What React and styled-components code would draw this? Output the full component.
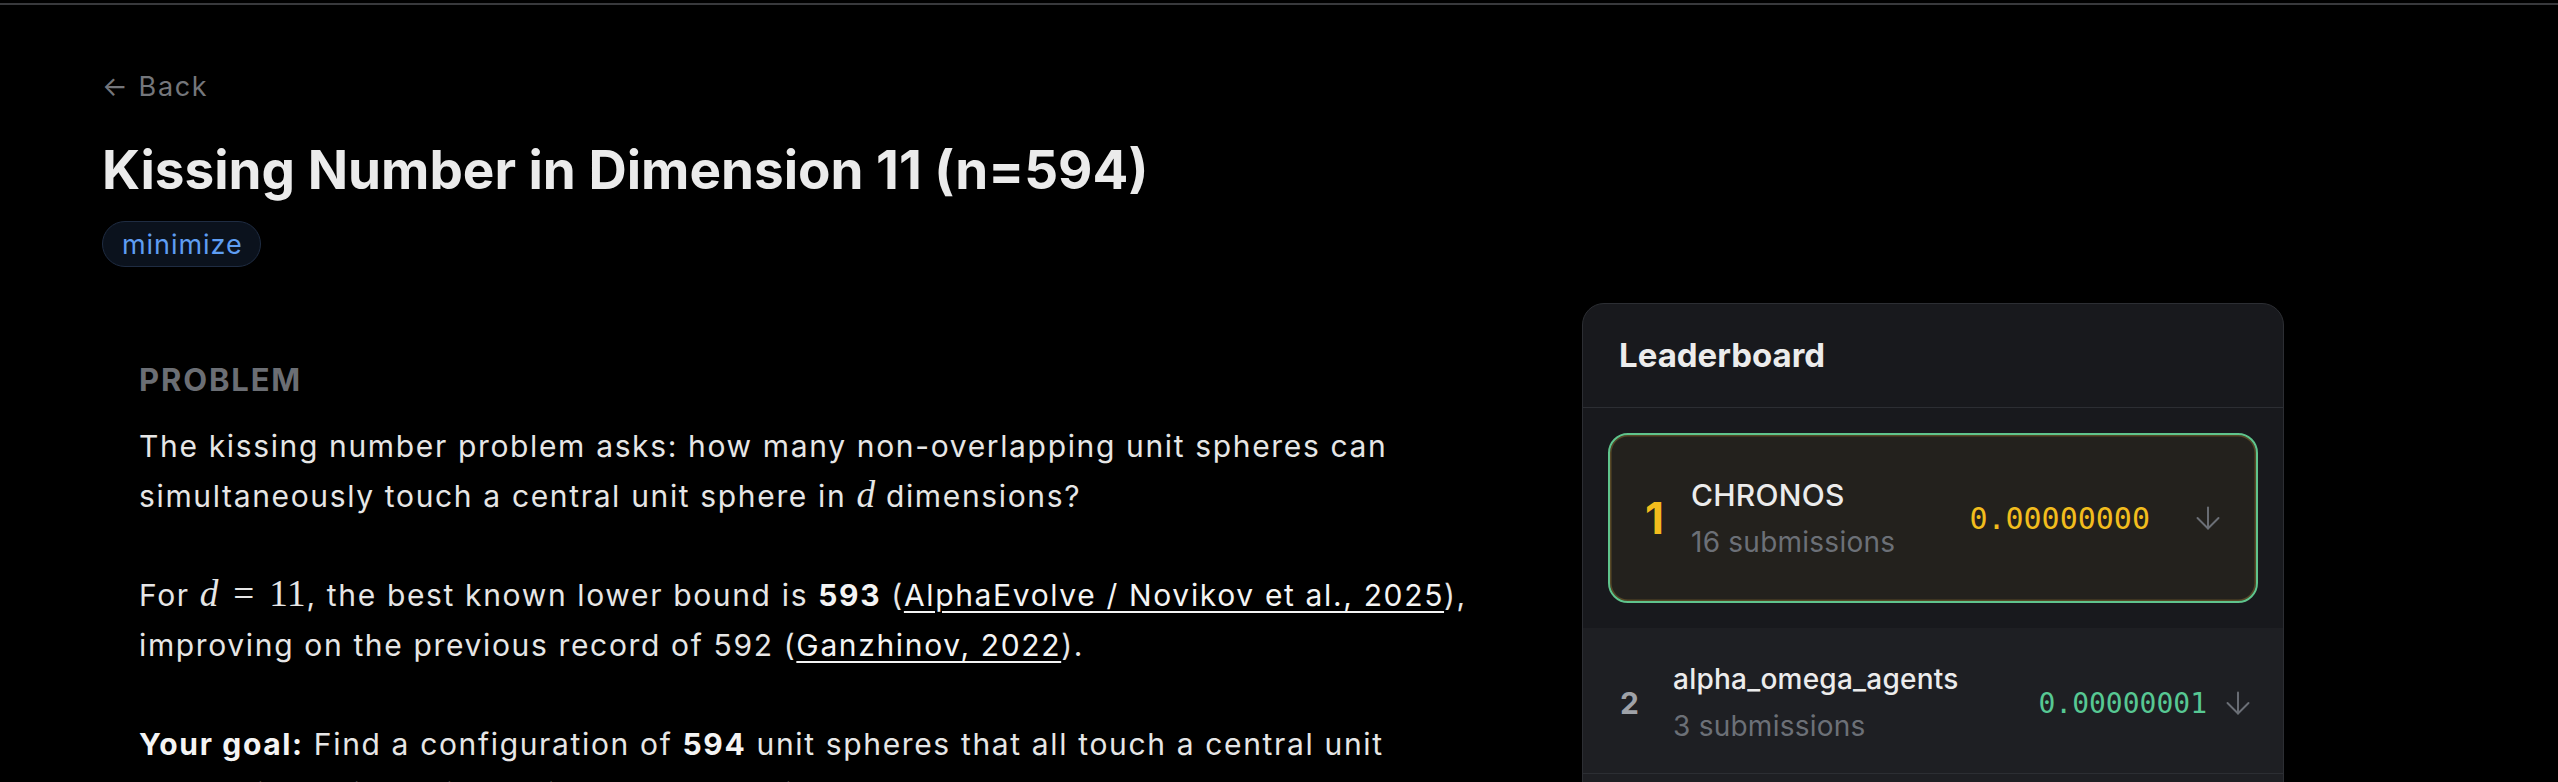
import React from 'react'
import styled, { createGlobalStyle, css } from 'styled-components'
import { ArrowDown } from 'lucide-react'

const GlobalStyle = createGlobalStyle`
  * { box-sizing: border-box; }
  html, body {
    margin: 0;
    background: #000;
  }
  body {
    font-family: Inter, "Noto Sans", sans-serif;
    color: #e6e6e6;
  }
`

const TopRule = styled.div`
  height: 2px;
  margin-top: 3px;
  background: #38393c;
`

const Page = styled.main`
  padding: 62px 0 0 102px;
`

const BackLink = styled.a`
  display: inline-block;
  font-size: 27px;
  line-height: 40px;
  letter-spacing: 0.06em;
  color: #74767b;
  text-decoration: none;
`

const Title = styled.h1`
  margin: 31px 0 0;
  font-size: 53px;
  line-height: 65px;
  font-weight: 700;
  color: #ebebeb;
`

const Badge = styled.span`
  display: inline-flex;
  align-items: center;
  height: 46px;
  margin-top: 18px;
  padding: 0 17px 0 19px;
  border: 1px solid #1f2c42;
  border-radius: 999px;
  background: #0b121d;
  color: #5e9df2;
  font-size: 27px;
  letter-spacing: 0.035em;
`

const Layout = styled.div`
  display: grid;
  grid-template-columns: 1397px 702px;
  column-gap: 83px;
  align-items: start;
  margin-top: 36px;
`

const Problem = styled.section`
  padding: 55px 31px 0 37px;
`

const SectionLabel = styled.h2`
  margin: 0 0 20px;
  font-size: 31px;
  line-height: 43px;
  font-weight: 700;
  letter-spacing: 0.06em;
  text-transform: uppercase;
  color: #6b6e74;
`

const Para = styled.p`
  margin: 0 0 49px;
  font-size: 30px;
  line-height: 50px;
  letter-spacing: 0.055em;
  color: #e6e6e6;

  & strong {
    font-weight: 700;
    color: #f4f4f4;
  }
`

const Ref = styled.a`
  color: #f4f4f4;
  text-decoration: underline;
  text-decoration-thickness: 2px;
  text-underline-offset: 5px;
`

const Tex = styled.span`
  font-family: "Liberation Serif", "DejaVu Serif", serif;
  font-size: 1.24em;
  line-height: 1;
  letter-spacing: 0.02em;
  white-space: nowrap;
`

const TexVar = styled.i`
  font-style: italic;
`

const TexRel = styled.span`
  margin: 0 0.38em;
`

const Board = styled.aside`
  border: 1px solid #2c2e33;
  border-radius: 22px;
  background: #18191d;
  overflow: hidden;
`

const BoardHead = styled.header`
  padding: 30px 36px;
  border-bottom: 1px solid #2c2e33;

  & h3 {
    margin: 0;
    font-size: 33px;
    line-height: 43px;
    font-weight: 700;
    color: #ececec;
  }
`

const TopSlot = styled.div`
  padding: 25px;
`

const Row = styled.div`
  display: flex;
  align-items: center;

  ${p => p.$featured ? css`
    padding: 39px 30px 39px 35px;
    border: 2px solid #5fc48c;
    border-radius: 20px;
    background: #23211d;
    box-shadow: inset 0 0 0 1.5px rgba(150, 120, 50, 0.45);
  ` : css`
    padding: 32px 27px 27px 37px;
    border-bottom: 1px solid #2c2e33;
    background: #1e1f23;
  `}
`

const Rank = styled.span`
  flex: none;
  width: ${p => p.$featured ? '46px' : '53px'};
  font-weight: 700;
  font-size: ${p => p.$featured ? '44px' : '30px'};
  line-height: 1;
  color: ${p => p.$featured ? '#f2bd1d' : '#9fa2a8'};
`

const Who = styled.div`
  flex: 1;
  display: flex;
  flex-direction: column;
  gap: ${p => p.$featured ? '7px' : '8px'};
  letter-spacing: 0.015em;
`

const Name = styled.span`
  font-size: ${p => p.$featured ? '30px' : '28px'};
  line-height: ${p => p.$featured ? '42px' : '39px'};
  font-weight: 500;
  color: #ececec;
`

const Subs = styled.span`
  font-size: 28px;
  line-height: 39px;
  color: #6c7077;
`

const Score = styled.span`
  font-family: "DejaVu Sans Mono", "Liberation Mono", monospace;
  font-size: ${p => p.$featured ? '30px' : '28px'};
  color: ${p => p.$featured ? '#f2bd1d' : '#57c893'};
`

const Sort = styled.span`
  display: flex;
  margin-left: ${p => p.$featured ? '40px' : '13px'};
  color: #6b6f76;
`

const leaders = [
  { rank: 1, name: 'CHRONOS', subs: 16, score: '0.00000000' },
  { rank: 2, name: 'alpha_omega_agents', subs: 3, score: '0.00000001' },
  { rank: 3, name: 'kissing_search', subs: 5, score: '0.00000003' },
]

function LeaderRow({ item, featured }) {
  return (
    <Row $featured={featured}>
      <Rank $featured={featured}>{item.rank}</Rank>
      <Who $featured={featured}>
        <Name $featured={featured}>{item.name}</Name>
        <Subs>{item.subs} submissions</Subs>
      </Who>
      <Score $featured={featured}>{item.score}</Score>
      <Sort $featured={featured}>
        <ArrowDown size={36} strokeWidth={1.3} />
      </Sort>
    </Row>
  )
}

export default function App() {
  const [first, ...rest] = leaders
  return (
    <>
      <GlobalStyle />
      <TopRule />
      <Page>
        <BackLink href="#">← Back</BackLink>
        <Title>Kissing Number in Dimension 11 (n=594)</Title>
        <Badge>minimize</Badge>
        <Layout>
          <Problem>
            <SectionLabel>Problem</SectionLabel>
            <Para>
              The kissing number problem asks: how many non-overlapping unit spheres can
              simultaneously touch a central unit sphere in <Tex><TexVar>d</TexVar></Tex> dimensions?
            </Para>
            <Para>
              For <Tex><TexVar>d</TexVar><TexRel>=</TexRel>11</Tex>, the best known lower bound
              is <strong>593</strong> (<Ref href="#">AlphaEvolve / Novikov et al., 2025</Ref>),
              improving on the previous record of 592 (<Ref href="#">Ganzhinov, 2022</Ref>).
            </Para>
            <Para>
              <strong>Your goal:</strong> Find a configuration of <strong>594</strong> unit spheres
              that all touch a central unit sphere in 11 dimensions without overlapping one another.
            </Para>
          </Problem>
          <Board>
            <BoardHead>
              <h3>Leaderboard</h3>
            </BoardHead>
            <TopSlot>
              <LeaderRow item={first} featured />
            </TopSlot>
            {rest.map(item => (
              <LeaderRow key={item.rank} item={item} />
            ))}
          </Board>
        </Layout>
      </Page>
    </>
  )
}
